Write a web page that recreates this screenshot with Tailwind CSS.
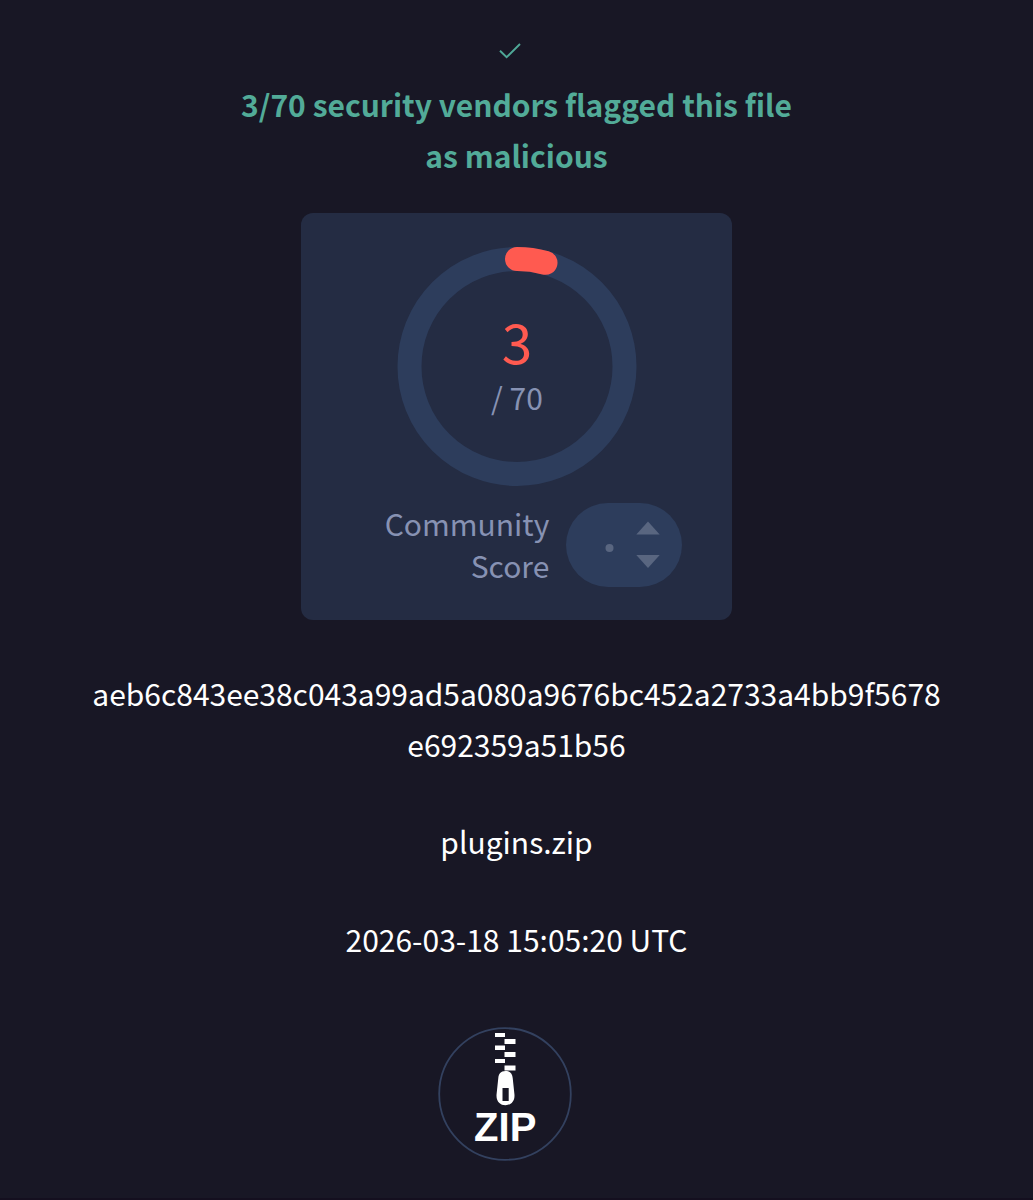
<!DOCTYPE html>
<html lang="en">
<head>
  <meta charset="UTF-8" />
  <meta name="viewport" content="width=device-width, initial-scale=1.0"/>
  <title>File report</title>
  <script src="https://cdn.jsdelivr.net/npm/@tailwindcss/browser@4"></script>
</head>
<body class="bg-[#181725] min-h-screen font-['Noto_Sans_CJK_SC',sans-serif] text-[30px] leading-[51px] text-white">

  <main class="flex flex-col items-center h-[1200px] overflow-hidden border-b-2 border-[#140f1f]">

    <!-- verdict -->
    <svg class="mt-[42px] mr-[13px] w-6 h-[18px] shrink-0" viewBox="0 0 24 18" fill="none" stroke="#4fa897" stroke-width="1.9">
      <path d="M2 8.7 L8.6 15.2 L22 2"/>
    </svg>
    <h1 class="mt-[19px] w-[600px] text-center font-bold text-[#52ab98]">
      3/70 security vendors flagged this file<br>as malicious
    </h1>

    <!-- detection score -->
    <section class="mt-8 w-[431px] h-[407px] shrink-0 rounded-xl bg-[#242c43] text-[#8792b3] flex flex-col items-center">
      <svg class="mt-[33px] w-60 h-60 shrink-0" viewBox="0 0 240 240" fill="none" stroke-width="24">
        <circle cx="120" cy="120.5" r="107.5" stroke="#2d3d5c"/>
        <path d="M120 13 A107.5 107.5 0 0 1 148.5 16.8" stroke="#ff5a50" stroke-linecap="round"/>
        <text x="120" y="117.5" text-anchor="middle" font-size="55" fill="#ff5a50" stroke="none">3</text>
        <text x="120" y="164" text-anchor="middle" font-size="30" fill="#8792b3" stroke="none">/ 70</text>
      </svg>
      <div class="mt-[17px] ml-[34px] flex items-center gap-[17px]">
        <p class="-mt-0.5 text-right leading-[42px]">Community<br>Score</p>
        <div class="w-[116px] h-[84px] rounded-full bg-[#2d3d5c]">
          <svg class="w-full h-full" viewBox="0 0 116 84" fill="#596680">
            <circle cx="43.5" cy="45" r="4"/>
            <path d="M82 18.5 L93.7 31.5 H70.3 Z"/>
            <path d="M82 65 L93.7 52 H70.3 Z"/>
          </svg>
        </div>
      </div>
    </section>

    <!-- file details -->
    <p class="mt-12 text-center tracking-[-0.02px]">aeb6c843ee38c043a99ad5a080a9676bc452a2733a4bb9f5678<br>e692359a51b56</p>
    <p class="mt-[46px]">plugins.zip</p>
    <p class="mt-[47px]">2026-03-18 15:05:20 UTC</p>

    <!-- file type badge -->
    <svg class="mt-[61px] mr-6 w-[136px] h-[136px] shrink-0" viewBox="0 0 136 136" fill="#fff">
      <circle cx="68" cy="68" r="65.8" fill="none" stroke="#33415f" stroke-width="1.8"/>
      <path d="M58 7h10v4h-10z M67.5 13h11v5h-11z M58 19.5h10v4.5h-10z M67.5 26h11v5h-11z M58 33h10v4h-10z M67.5 39.5h11v5h-11z"/>
      <path fill-rule="evenodd" d="M68.5 45 C73.5 45 75.3 48 75.7 52 L77.4 68 C78.2 75 74 79.2 68.5 79.2 C63 79.2 58.8 75 59.6 68 L61.3 52 C61.7 48 63.5 45 68.5 45 Z M65.5 62 V75 H71.7 V62 Z"/>
      <text class="font-['Liberation_Sans',sans-serif] font-bold text-[40px]" x="68.2" y="114.5" text-anchor="middle">ZIP</text>
    </svg>
  </main>

</body>
</html>
